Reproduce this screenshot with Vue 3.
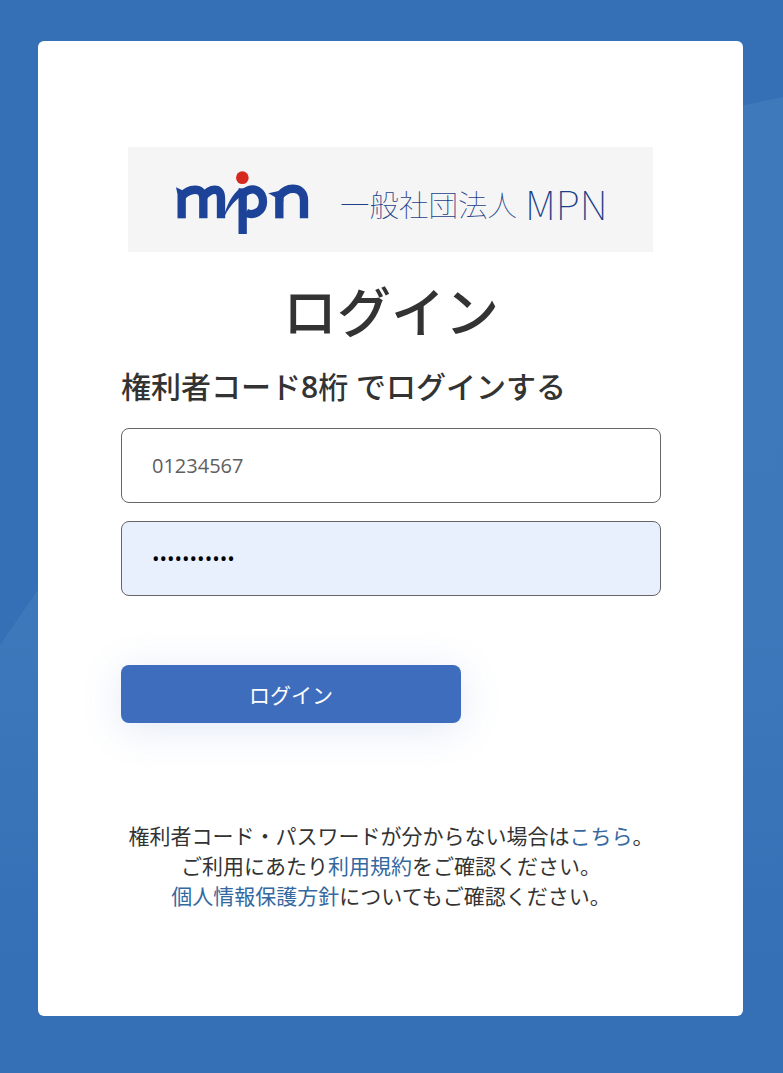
<script setup>
const account = '01234567'
const password = 'secretpass1'
</script>

<template>
  <div class="page">
    <svg class="backdrop" viewBox="0 0 783 1073" preserveAspectRatio="none" aria-hidden="true">
      <defs>
        <linearGradient id="glow" x1="0" y1="0" x2="0" y2="1">
          <stop offset="0.1" stop-color="#3e79bb" />
          <stop offset="0.55" stop-color="#3d78bb" />
          <stop offset="0.88" stop-color="#3570b7" />
        </linearGradient>
      </defs>
      <path d="M0 645 L38 590 C150 390 420 170 783 97 L783 1073 L0 1073 Z" fill="url(#glow)" />
    </svg>
    <main class="card">
      <div class="logo">
        <svg class="mark" viewBox="0 0 510 255" role="img" aria-label="mpn">
          <circle cx="247" cy="53" r="19" fill="#d5281f" />
          <g fill="none" stroke="#1c4397" stroke-width="25">
            <path d="M65 175 V95" />
            <path d="M65 110 C85 85 130 78 130 115 V175" />
            <path d="M130 110 C150 85 183 78 183 115 V175" />
            <path d="M248 222 V85" />
            <path d="M250 100 C285 72 309 100 309 125 C309 155 280 170 258 158" />
            <path d="M358 175 V100" />
            <path d="M358 108 C385 75 432 80 432 120 V175" />
          </g>
          <path d="M48 82 L78 96 L78 112 L52 100 Z" fill="#1c4397" />
          <path d="M190 175 C200 135 215 105 240 85 L240 112 C220 125 203 150 190 175 Z" fill="#1c4397" />
          <path d="M325 100 L370 90 L370 125 Z" fill="#1c4397" />
        </svg>
        <span class="org">一般社団法人<span class="org-latin">MPN</span></span>
      </div>

      <h1 class="title">ログイン</h1>
      <h2 class="subtitle">権利者コード<span class="digit">8</span>桁 でログインする</h2>

      <form class="form" @submit.prevent>
        <input class="field" type="text" :value="account" aria-label="権利者コード" />
        <input class="field filled" type="password" :value="password" aria-label="パスワード" />
        <button class="submit" type="submit">ログイン</button>
      </form>

      <p class="notes">
        権利者コード・パスワードが分からない場合は<a href="#">こちら</a>。<br />
        ご利用にあたり<a href="#">利用規約</a>をご確認ください。<br />
        <a href="#">個人情報保護方針</a>についてもご確認ください。
      </p>
    </main>
  </div>
</template>

<style>
body { margin: 0; }
</style>

<style scoped>
.page {
  position: relative;
  box-sizing: border-box;
  width: 783px;
  height: 1073px;
  padding: 41px 40px 57px 38px;
  background: #3570b7;
  overflow: hidden;
  font-family: "Open Sans", "Noto Sans CJK JP", sans-serif;
  color: #333;
}
.backdrop {
  position: absolute;
  inset: 0;
  width: 100%;
  height: 100%;
}
.card {
  position: relative;
  box-sizing: border-box;
  height: 975px;
  padding: 106px 82px 0 83px;
  background: #fff;
  border-radius: 6px;
}
.logo {
  box-sizing: border-box;
  display: flex;
  align-items: center;
  width: 525px;
  height: 105px;
  margin-left: 7px;
  padding-left: 32px;
  background: #f5f5f6;
  overflow: hidden;
}
.mark {
  width: 170px;
  height: 85px;
  flex: none;
  margin-top: 6px;
}
.org {
  margin: 6px 0 0 10px;
  font-family: "Noto Sans CJK JP", sans-serif;
  font-weight: 100;
  font-size: 29.500px;
  color: #1c3f8a;
  white-space: nowrap;
  display: flex;
  align-items: center;
}
.org-latin {
  margin-left: 8px;
  font-size: 40px;
  line-height: 1;
  letter-spacing: 0;
}
.title {
  margin: 22px 0 0;
  font-family: "Noto Sans CJK JP", sans-serif;
  font-size: 54px;
  line-height: 72px;
  font-weight: 500;
  text-align: center;
}
.subtitle {
  margin: 20px 0 0;
  font-family: "Open Sans", "Noto Sans CJK JP", sans-serif;
  font-size: 30px;
  line-height: 42px;
  font-weight: 500;
}
.digit {
  font-weight: 600;
}
.form {
  display: flex;
  flex-direction: column;
  align-items: flex-start;
  margin-top: 20px;
}
.field {
  box-sizing: border-box;
  width: 540px;
  height: 75px;
  padding: 0 30px;
  margin-bottom: 18px;
  border: 1px solid #666;
  border-radius: 8px;
  background: #fff;
  font-family: "Open Sans", sans-serif;
  font-size: 20px;
  color: #5f5f5f;
  outline: none;
}
.filled {
  background: #e8f0fe;
  color: #000;
}
.submit {
  width: 340px;
  height: 58px;
  margin-top: 51px;
  border: 0;
  border-radius: 8px;
  background: #3f6dbd;
  box-shadow: 0 6px 40px rgba(63, 109, 189, 0.15);
  color: #fff;
  font-family: "Noto Sans CJK JP", sans-serif;
  font-size: 21px;
}
.notes {
  margin: 97px 0 0;
  font-family: "Noto Sans CJK JP", sans-serif;
  font-size: 21px;
  line-height: 30px;
  text-align: center;
  color: #333;
}
.notes a {
  color: #34699f;
  text-decoration: none;
}
</style>
